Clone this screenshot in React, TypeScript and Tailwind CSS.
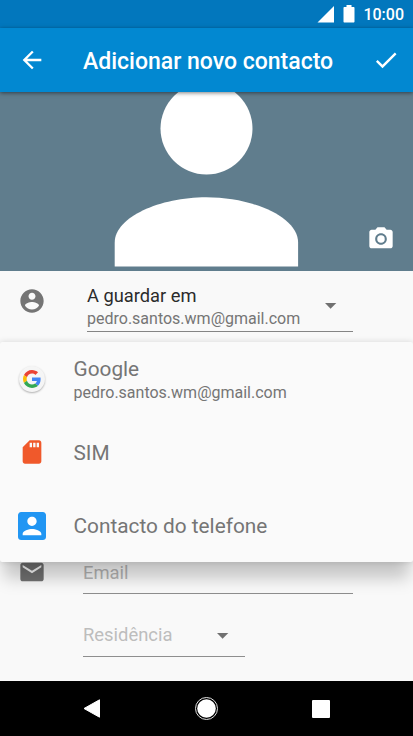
import React from "react";

const GoogleLogo = () => (
  <svg width="18" height="18" viewBox="0 0 48 48">
    <path
      fill="#EA4335"
      d="M24 9.5c3.54 0 6.71 1.22 9.21 3.6l6.85-6.85C35.9 2.38 30.47 0 24 0 14.62 0 6.51 5.38 2.56 13.22l7.98 6.19C12.43 13.72 17.74 9.5 24 9.5z"
    />
    <path
      fill="#4285F4"
      d="M46.98 24.55c0-1.57-.15-3.09-.38-4.55H24v9.02h12.94c-.58 2.96-2.26 5.48-4.78 7.18l7.73 6c4.51-4.18 7.09-10.36 7.09-17.65z"
    />
    <path
      fill="#FBBC05"
      d="M10.53 28.59A14.5 14.5 0 0 1 9.77 24c0-1.6.28-3.14.76-4.59l-7.98-6.19A23.9 23.9 0 0 0 0 24c0 3.88.92 7.54 2.56 10.78l7.97-6.19z"
    />
    <path
      fill="#34A853"
      d="M24 48c6.48 0 11.93-2.13 15.89-5.81l-7.73-6c-2.15 1.45-4.92 2.3-8.16 2.3-6.26 0-11.57-4.22-13.47-9.91l-7.98 6.19C6.51 42.62 14.62 48 24 48z"
    />
  </svg>
);

const Caret = () => (
  <svg className="shrink-0" width="12" height="6" viewBox="0 0 12 6" fill="#717171">
    <path d="M0 0h11.300L5.600 5.800z" />
  </svg>
);

const StatusBar = () => (
  <div className="h-7 shrink-0 bg-[#0277bd] flex items-center justify-end pr-[9px] text-white">
    <svg className="mr-[9px]" width="17" height="17" viewBox="0 0 17 17" fill="currentColor">
      <path d="M17 0v16.500H.5z" />
    </svg>
    <svg className="mr-2" width="12" height="18" viewBox="0 0 12 18" fill="currentColor">
      <path d="M3.500 0h5v2h2c.6 0 1 .4 1 1v13.500c0 .6-.4 1-1 1h-9c-.6 0-1-.4-1-1V3c0-.6.4-1 1-1h2z" />
    </svg>
    <p className="pt-[2px] text-[16px] leading-5 font-medium">10:00</p>
  </div>
);

const Header = () => (
  <header className="relative z-10 h-16 shrink-0 bg-[#0288d1] flex items-center pl-[18px] pr-[13px] text-white shadow-[0_1px_4px_rgba(0,0,0,0.5)]">
    <svg width="28" height="28" viewBox="0 0 24 24" fill="currentColor">
      <path d="M20 11H7.830l5.590-5.590L12 4l-8 8 8 8 1.410-1.410L7.830 13H20v-2z" />
    </svg>
    <h1 className="ml-[37px] pt-1 grow text-[23px] leading-7 font-medium whitespace-nowrap">
      Adicionar novo contacto
    </h1>
    <svg width="28" height="28" viewBox="0 0 24 24" fill="currentColor">
      <path d="M9 16.170L4.830 12l-1.420 1.410L9 19 21 7l-1.410-1.410z" />
    </svg>
  </header>
);

const Photo = () => (
  <section className="relative h-[179px] shrink-0 bg-[#607d8d] flex justify-center overflow-hidden">
    <svg width="185" height="179" viewBox="0 0 185 179" fill="#fff">
      <circle cx="92.500" cy="36.500" r="46" />
      <path d="M.7 174.500v-24C.7 125 46 105.200 92.300 105.200s91.800 19.800 91.800 45.300v24z" />
    </svg>
    <svg
      className="absolute right-[18px] bottom-[18px]"
      width="28"
      height="28"
      viewBox="0 0 24 24"
      fill="#fff"
    >
      <circle cx="12" cy="12" r="3.200" />
      <path d="M9 2L7.170 4H4c-1.100 0-2 .9-2 2v12c0 1.100.9 2 2 2h16c1.100 0 2-.9 2-2V6c0-1.100-.9-2-2-2h-3.170L15 2H9zm3 15c-2.760 0-5-2.240-5-5s2.240-5 5-5 5 2.240 5 5-2.240 5-5 5z" />
    </svg>
  </section>
);

const AccountMenu = () => (
  <ul className="absolute inset-x-0 top-[71px] h-[220px] flex flex-col rounded-[2px] bg-[#fafafa] text-[#757575] shadow-[0_20px_16px_-4px_rgba(0,0,0,0.21),0_0_6px_rgba(0,0,0,0.14)]">
    <li className="h-[73px] flex items-center pl-[19px]">
      <span className="size-[26px] rounded-full bg-[#f5f5f5] flex items-center justify-center shadow-[0_1px_2px_rgba(0,0,0,0.3)]">
        <GoogleLogo />
      </span>
      <div className="ml-[28.500px] pt-[5px]">
        <p className="text-[20.800px] leading-6">Google</p>
        <p className="text-[16px] leading-6">pedro.santos.wm@gmail.com</p>
      </div>
    </li>
    <li className="h-[74px] flex items-center pl-[18px]">
      <svg width="28" height="28" viewBox="0 0 24 24" fill="#f0592b">
        <path d="M18 2h-8L4.020 8 4 20c0 1.100.9 2 2 2h12c1.100 0 2-.9 2-2V4c0-1.100-.9-2-2-2zm-6 6h-2V4h2v4zm3 0h-2V4h2v4zm3 0h-2V4h2v4z" />
      </svg>
      <p className="ml-[27.500px] pt-px text-[20.800px] leading-6">SIM</p>
    </li>
    <li className="h-[73px] flex items-center pl-[18px]">
      <svg width="28" height="28" viewBox="3 3 18 18" fill="#2196f3">
        <path d="M3 5v14c0 1.100.89 2 2 2h14c1.100 0 2-.9 2-2V5c0-1.100-.9-2-2-2H5c-1.110 0-2 .9-2 2z" />
        <path
          fill="#fff"
          d="M15 9c0 1.660-1.340 3-3 3s-3-1.340-3-3 1.340-3 3-3 3 1.340 3 3zm-9 8c0-2 4-3.100 6-3.100s6 1.100 6 3.100v1H6v-1z"
        />
      </svg>
      <p className="ml-[27.500px] pt-px text-[20.800px] leading-6">Contacto do telefone</p>
    </li>
  </ul>
);

const Form = () => (
  <main className="relative grow bg-[#f9f9f9] pl-[18px] pr-[60px]">
    <div className="flex h-[61px]">
      <svg className="mt-4" width="28" height="28" viewBox="0 0 24 24" fill="#757575">
        <path d="M12 2C6.480 2 2 6.480 2 12s4.480 10 10 10 10-4.480 10-10S17.520 2 12 2zm0 3c1.660 0 3 1.340 3 3s-1.340 3-3 3-3-1.340-3-3 1.340-3 3-3zm0 14.200c-2.500 0-4.710-1.280-6-3.220.03-1.990 4-3.080 6-3.080 1.990 0 5.970 1.090 6 3.080-1.290 1.940-3.500 3.220-6 3.220z" />
      </svg>
      <div className="ml-[41px] grow flex items-start justify-between pt-[13px] pr-4 border-b border-[#858585]">
        <div>
          <p className="text-[18.300px] leading-6 text-[#2b2b2b]">A guardar em</p>
          <p className="text-[16px] leading-[22px] text-[#757575]">pedro.santos.wm@gmail.com</p>
        </div>
        <div className="pt-[19px]">
          <Caret />
        </div>
      </div>
    </div>

    {/* email */}
    <div className="mt-[226px] flex h-9">
      <svg width="28" height="28" viewBox="0 0 24 24" fill="#717171">
        <path d="M20 4H4c-1.100 0-1.990.9-1.990 2L2 18c0 1.100.9 2 2 2h16c1.100 0 2-.9 2-2V6c0-1.100-.9-2-2-2zm0 4l-8 5-8-5V6l8 5 8-5v2z" />
      </svg>
      <div className="ml-[37px] grow pt-[3px] border-b border-[#8e8e8e]">
        <p className="text-[18.400px] leading-6 text-[#b5b5b5]">Email</p>
      </div>
    </div>
    <div className="ml-[65px] mt-7 w-[162px] h-[35px] flex items-start justify-between pr-4 border-b border-[#8e8e8e]">
      <p className="pt-px text-[18.400px] leading-6 text-[#bdbdbd]">Residência</p>
      <div className="pt-[11px]">
        <Caret />
      </div>
    </div>

    <AccountMenu />
  </main>
);

const NavBar = () => (
  <nav className="h-[55px] shrink-0 bg-black flex items-center justify-between px-[83px]">
    <svg width="18" height="20" viewBox="0 0 18 20" fill="#fff" stroke="#fff" strokeLinejoin="round">
      <path d="M1 9.500L16.500.8v17.400z" />
    </svg>
    <svg width="24" height="24" viewBox="0 0 24 24" fill="#fff">
      <circle cx="11.500" cy="11.500" r="9.300" />
      <circle cx="11.500" cy="11.500" r="11" fill="none" stroke="#e0e0e0" />
    </svg>
    <div className="size-[18px] rounded-[1px] bg-white"></div>
  </nav>
);

const App = () => {
  return (
    <div className="w-[413px] h-[736px] flex flex-col overflow-hidden bg-[#f9f9f9] font-[Roboto,sans-serif]">
      <StatusBar />
      <Header />
      <Photo />
      <Form />
      <NavBar />
    </div>
  );
};

export default App;
